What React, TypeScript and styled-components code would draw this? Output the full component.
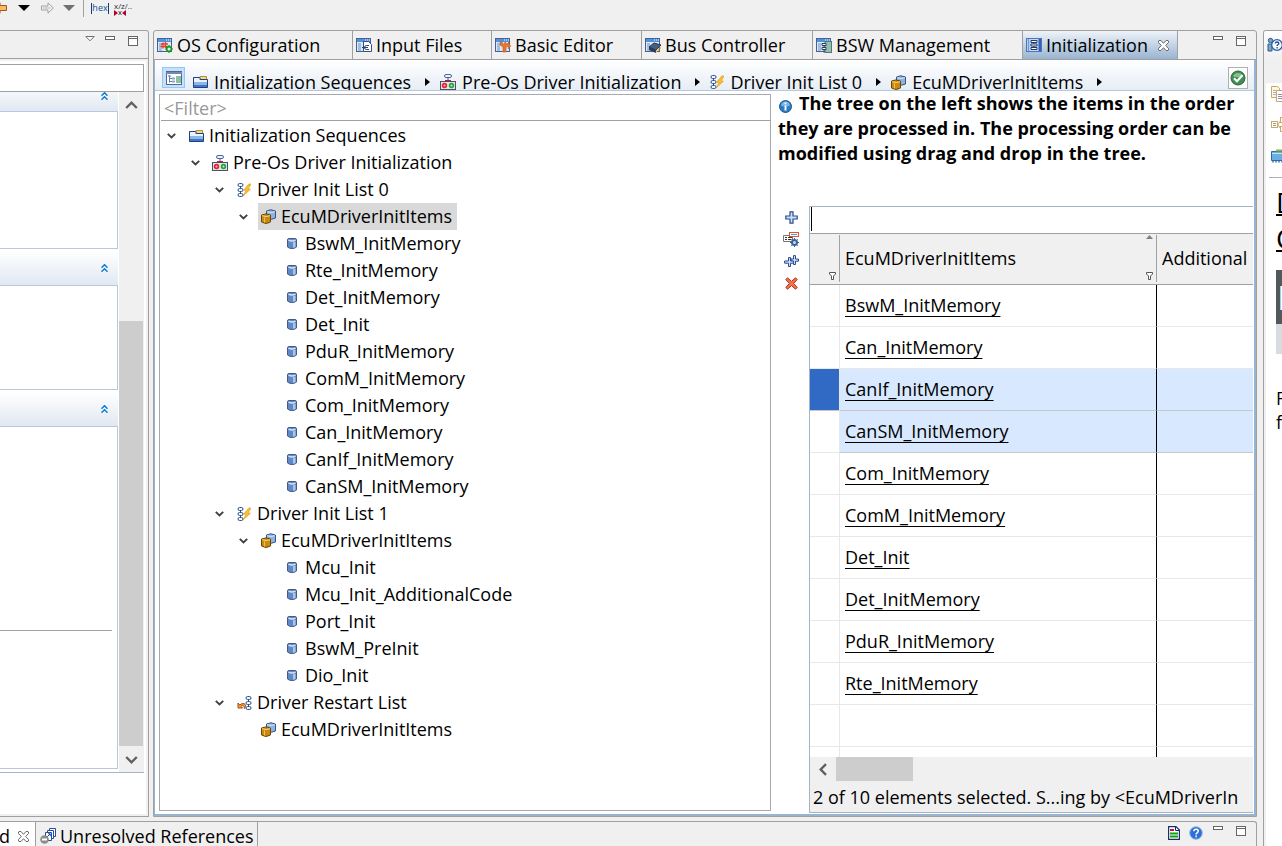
import React from "react";
import styled, { createGlobalStyle } from "styled-components";

const GlobalStyle = createGlobalStyle`
  *, *::before, *::after { box-sizing: border-box; }
  html, body, #root { height: 100%; }
  body {
    margin: 0;
    overflow: hidden;
    background: #f0f0f0;
    color: #000;
    font-family: "Open Sans", "Noto Sans", sans-serif;
    font-size: 18px;
    line-height: 27px;
  }
  button, input { font: inherit; color: inherit; margin: 0; padding: 0; }
  button { border: 0; background: none; display: flex; align-items: center; justify-content: center; }
  svg { display: block; flex: none; }
  p, h2 { margin: 0; }
`;

const line = "#a0a0a0";
const frame = "#99b4d1";

/* ---------- icons ---------- */

type IconProps = { size?: number; h?: number };

const Svg = ({ size = 16, h, box = "0 0 16 16", children }: IconProps & { box?: string; children: React.ReactNode }) => (
  <svg width={size} height={h ?? size} viewBox={box} aria-hidden="true">{children}</svg>
);

const WindowBase = () => (
  <>
    <rect x="0.5" y="1.5" width="14" height="13" fill="#dbe9f8" stroke="#4a5f92" />
    <rect x="1" y="2" width="13" height="3" fill="#4f93dd" />
    <path d="M9 3h1M11 3h1M13 3h1" stroke="#fff" />
    <rect x="2" y="6" width="3" height="8" fill="#9fbfe2" />
  </>
);

const OsIcon = () => (
  <Svg>
    <WindowBase />
    <path d="M6 5.500v6M8.500 5v6M4 7h7M3.500 9.500h7" stroke="#e8402c" strokeWidth="1.300" />
    <circle cx="12" cy="12" r="2.300" fill="#fff" stroke="#18951f" strokeWidth="1.600" />
    <path d="M12 8v2M12 14v2M8 12h2M14 12h2M9.300 9.300l1.200 1.200M13.500 13.500l1.200 1.200M14.700 9.300l-1.200 1.200M10.500 13.500l-1.200 1.200" stroke="#18951f" strokeWidth="1.200" />
  </Svg>
);
const InputFilesIcon = () => (
  <Svg>
    <WindowBase />
    <path d="M7.500 4.500h5l3 3v7h-8z" fill="#fff" stroke="#3b4c80" />
    <path d="M13 8.500h-2.500a2 2 0 0 0 0 4H13M6 10.500h6" stroke="#2b4378" fill="none" />
  </Svg>
);
const BasicIcon = () => (
  <Svg>
    <WindowBase />
    <path d="M5 5v3l3 2v5h3v-5l3-2V5l-2 2-2-2-1 3-2-3z" fill="#e9772d" stroke="#c2571b" strokeWidth="0.600" />
    <path d="M11 9h5M13.500 7v5" stroke="#e9772d" strokeWidth="1.500" />
  </Svg>
);
const BusIcon = () => (
  <Svg>
    <WindowBase />
    <path d="M4 10l5-4 7 2-5 5z" fill="#4a5d80" stroke="#27344f" />
    <path d="M4 10l7 3v3l-7-3z" fill="#2c3a58" />
    <path d="M11.500 13v2.500M13.500 11v3M15.300 9.500V12" stroke="#f3c32b" strokeWidth="1.200" />
  </Svg>
);
const BswIcon = () => (
  <Svg>
    <WindowBase />
    <rect x="9" y="4.500" width="6.500" height="11" fill="#8fc3a3" stroke="#55708c" />
    <path d="M6 6.500h4v2H6zM6 10.500h4v2H6zM8 8.500v2M8 12.500v3" fill="#fff" stroke="#2d3f60" />
  </Svg>
);
const InitIcon = () => (
  <Svg>
    <rect x="0.500" y="1.500" width="15" height="13" fill="#c3dcf5" stroke="#5274b0" />
    <path d="M2.500 2v12" stroke="#6f9ddb" strokeWidth="1.500" />
    <rect x="12.500" y="2" width="2.500" height="12" fill="#2f62b4" />
    <path d="M5 3.500h6v2H5zM5 7h6v2H5zM5 10.500h6v2H5zM8 5.500V7M8 9v1.500" fill="#fff" stroke="#233a66" />
  </Svg>
);
const FolderIcon = () => (
  <Svg size={15} h={14} box="0 0 15 14">
    <path d="M7 1.500h6.500V5H7z" fill="#f4d98b" stroke="#b98d2c" />
    <path d="M0.500 2.500h6l1 2h7v8h-14z" fill="#3a77c8" stroke="#24407c" />
    <path d="M1 3h5.500v2H14v2H1z" fill="#eaf3fc" />
    <path d="M1 7h13v3H1z" fill="#8ab6e8" />
  </Svg>
);
const StagesIcon = () => (
  <Svg>
    <rect x="4.500" y="0.500" width="7" height="3" rx="1.500" fill="#eaf4ff" stroke="#44699e" />
    <path d="M8 4v5M5 6.500h6" stroke="#a8264b" fill="none" />
    <rect x="0.500" y="7.500" width="15" height="8" fill="#dfe3ea" stroke="#4a4f63" />
    <circle cx="4.500" cy="11.500" r="2.700" fill="#e8202a" />
    <circle cx="11.500" cy="11.500" r="2.700" fill="#23a23a" />
    <circle cx="4.500" cy="11.500" r="1" fill="#fbc4c4" />
    <circle cx="11.500" cy="11.500" r="1" fill="#c9f2cc" />
  </Svg>
);
const ChainIcon = () => (
  <g fill="#eef6ff" stroke="#2d4f86">
    <rect x="1" y="0.500" width="5" height="3" rx="1.500" />
    <rect x="1" y="5.500" width="5" height="3" rx="1.500" />
    <rect x="1" y="10.500" width="5" height="3" rx="1.500" />
    <path d="M3.500 3v3M3.500 8v3" />
  </g>
);
const DriverListIcon = () => (
  <Svg size={14} h={14} box="0 0 14 14">
    <ChainIcon />
    <path d="M12 0.800L6.500 7.200h2.700L6 13 13.500 6.200h-2.500L14 1.300z" fill="#fbc02c" stroke="#dd9414" strokeWidth="0.600" />
  </Svg>
);
const RestartIcon = () => (
  <Svg size={15} h={14} box="0 0 15 14">
    <g transform="translate(8 0)"><ChainIcon /></g>
    <path d="M1 7v5h4.500L4 10.300c1.500-1.500 3.500-.8 3.300 2.200C10.500 9 7 5.500 2.800 9z" fill="#f6a54a" stroke="#9c4e0d" />
  </Svg>
);
const ContainerIcon = () => (
  <Svg size={15} h={15} box="0 0 15 15">
    <path d="M5.500 2q4-2.500 9 0v7q-4 2.500-9 0z" fill="#8fb2e2" stroke="#39537f" />
    <path d="M6 2.700q4 1.600 8 0" stroke="#d5e5f7" fill="none" />
    <path d="M0.500 6q4-2.200 9 0v7q-4.500 3-9 0z" fill="#c98a12" stroke="#6f4708" />
    <path d="M1.200 6.700q4 1.700 7.800 0" stroke="#f7db8a" fill="none" />
    <path d="M3.500 8.500v5" stroke="#f0c24c" />
  </Svg>
);
const ItemIcon = () => (
  <Svg size={10} h={11} box="0 0 10 11">
    <path d="M0.500 2q0-1.500 1.500-1.500h6q1.500 0 1.500 1.500v7q-1.500 1.500-4.500 1.500T0.500 9z" fill="#5f8ac6" stroke="#445a88" />
    <path d="M1.500 2.200q3.500 1.600 7 0" stroke="#d5e4f5" fill="none" strokeWidth="1.400" />
    <path d="M6 4h2.500v5.300L6 9.800z" fill="#a8c6ea" />
  </Svg>
);
const Chevron = () => (
  <Svg size={9} h={6} box="0 0 9 6"><path d="M0.800 0.800l3.700 3.700 3.700-3.700" fill="none" stroke="#404040" strokeWidth="1.900" /></Svg>
);
const ScrollArrow = ({ turn = 0 }: { turn?: number }) => (
  <Svg size={13} box="0 0 13 13"><path transform={`rotate(${turn} 6.500 6.500)`} d="M1.200 9l5.300-5.300L11.800 9" fill="none" stroke="#606060" strokeWidth="2.400" /></Svg>
);
const Collapse = () => (
  <Svg size={7} h={8} box="0 0 7 8"><path d="M0.500 3.700l3-3 3 3M0.500 7.700l3-3 3 3" fill="none" stroke="#0a78d0" strokeWidth="1.400" /></Svg>
);
const MenuTri = () => (
  <Svg size={10} h={6} box="0 0 10 6"><path d="M0.800 0.500h8.400L5 4.800z" fill="#fff" stroke="#707070" /></Svg>
);
const MinIcon = () => (
  <Svg size={10} h={4} box="0 0 10 4"><rect x="0.500" y="0.500" width="9" height="3" fill="#fff" stroke="#666" /></Svg>
);
const MaxIcon = () => (
  <Svg size={10} h={10} box="0 0 10 10"><rect x="0.500" y="0.500" width="9" height="9" fill="#fff" stroke="#666" /><path d="M0 2.500h10" stroke="#666" /></Svg>
);
const CloseIcon = () => (
  <Svg size={11} box="0 0 11 11"><path d="M1 .5h2l2.500 2.800L8 .5h2l.5.5v1.500L7.700 5.500l2.800 3V10l-.5.500H8L5.500 7.700 3 10.500H1L.5 10V8.500l2.800-3-2.800-3V1z" fill="#fff" stroke="#686868" /></Svg>
);
const CrumbArrow = () => (
  <Svg size={5} h={8} box="0 0 5 8"><path d="M0 0v8l5-4z" fill="#000" /></Svg>
);
const OutlineIcon = () => (
  <Svg>
    <rect x="0.500" y="1.500" width="15" height="13" fill="#fff" stroke="#56658e" />
    <path d="M0 3h16" stroke="#7088b8" strokeWidth="2" />
    <rect x="10" y="6" width="5" height="7" fill="#8cc0a4" />
    <path d="M3.500 5.500v7M3.500 8.500h3M3.500 11.500h3M2 6h3" stroke="#5b80ae" fill="none" />
    <path d="M6 8.500h3M6 11.500h3" stroke="#8aa9cc" strokeWidth="2" />
  </Svg>
);
const CheckIcon = () => (
  <Svg box="0 0 16 16">
    <circle cx="8" cy="8" r="7" fill="#3f8f50" stroke="#2c6240" />
    <path d="M3 6a5.500 5 0 0 1 10 0q-5 2.500-10 0z" fill="#8bbd93" />
    <path d="M4 8.300l3 3 5.500-6" stroke="#fff" strokeWidth="2" fill="none" />
  </Svg>
);
const InfoIcon = () => (
  <svg width="13" height="13" viewBox="0 0 13 13" aria-label="Information">
    <circle cx="6.500" cy="6.500" r="6" fill="#2b7cc4" stroke="#1b5590" />
    <path d="M2 5.500a4.500 4 0 0 1 9 0q-4.500 2-9 0z" fill="#79b4e4" />
    <path d="M6.500 2.500v1.800M6.500 5.400v5" stroke="#fff" strokeWidth="1.900" />
  </svg>
);
const PlusIcon = () => (
  <Svg size={13} box="0 0 13 13"><path d="M5 .8h3V5h4.200v3H8v4.200H5V8H.8V5H5z" fill="#c8e4fb" stroke="#2c4a8c" strokeWidth="1.200" /></Svg>
);
const AddSettingsIcon = () => (
  <Svg size={16} h={15} box="0 0 16 15">
    <path d="M0.500 3.500h9v6h-9z" fill="#fff" stroke="#777" />
    <path d="M2 5.500h2M5 5.500h4M2 7.500h2M5 7.500h3" stroke="#333" />
    <rect x="6.500" y="0.500" width="9" height="4" fill="#fff" stroke="#e5532a" />
    <path d="M8 2.500h6" stroke="#5b95dc" />
    <circle cx="11.500" cy="10.500" r="2.500" fill="#c5daf2" stroke="#3d639f" strokeWidth="2" />
    <path d="M11.500 6v2M11.500 13v2M7 10.500h2M14 10.500h2M8.300 7.300l1.500 1.500M13.200 12.200l1.500 1.500M14.700 7.300l-1.500 1.500M9.800 12.200l-1.500 1.500" stroke="#3d639f" />
  </Svg>
);
const MultiPlusIcon = () => (
  <Svg size={15} h={12} box="0 0 15 12">
    <path d="M9.500.6h2V4h3v2.200h-3v3.300h-2V6.200H7V4h2.500z" fill="#c8e4fb" stroke="#2c4a8c" />
    <path d="M4.500 2.600h2V6h3v2.200h-3v3.300h-2V8.200H.6V6h3.900z" fill="#c8e4fb" stroke="#2c4a8c" />
  </Svg>
);
const DeleteIcon = () => (
  <Svg size={13} box="0 0 13 13"><path d="M2.500.8L6.500 4.400 10.500.8l1.700 1.700L8.600 6.500l3.600 4-1.700 1.700-4-3.600-4 3.600L.8 10.500l3.600-4L.8 2.500z" fill="#f4734a" stroke="#b92a14" /></Svg>
);
const FunnelIcon = () => (
  <Svg size={7} h={8} box="0 0 7 8"><path d="M0.500 0.500h6v1.500L4.500 4v3.500h-2V4l-2-2z" fill="#fff" stroke="#555" /></Svg>
);
const SortIcon = () => (
  <Svg size={7} h={4} box="0 0 7 4"><path d="M3.500 0L7 4H0z" fill="#808080" /></Svg>
);
const BackIcon = () => (
  <Svg size={8} h={12} box="0 0 8 12"><path d="M-6 6L0 .5V3.500h6.500v5H0v3z" fill="#ffb765" stroke="#9a5a1a" /></Svg>
);
const ForwardIcon = () => (
  <Svg size={13} h={12} box="0 0 13 12"><path d="M.5 4h6.500V.8L12.300 6 7 11.200V8H.5z" fill="#f4f4f4" stroke="#a0a0a0" /><path d="M2 6h8" stroke="#b5b5b5" /></Svg>
);
const DownTri = ({ color }: { color: string }) => (
  <Svg size={12} h={6} box="0 0 12 6"><path d="M0 0h12L6 6z" fill={color} /></Svg>
);
const SyncArrows = () => (
  <Svg size={12} h={6} box="0 0 12 6"><path d="M0 0v6L4 3zM12 0v6L8 3z" fill="#b00032" /><path d="M4.500 1l3 4M7.500 1l-3 4" stroke="#555" /></Svg>
);
const ReportIcon = () => (
  <Svg size={12} h={14} box="0 0 12 14">
    <path d="M0.600 0.600h7.400l3.400 3.400v9.400H0.600z" fill="#fff" stroke="#1c2d68" strokeWidth="1.200" />
    <path d="M7.500 1v3.500H11" stroke="#1c2d68" fill="none" />
    <path d="M2 4h4" stroke="#c0103c" strokeWidth="2" />
    <path d="M2 7.500h8M2 10.500h8" stroke="#10a010" strokeWidth="2" />
  </Svg>
);
const HelpIcon = () => (
  <Svg size={14} box="0 0 14 14">
    <circle cx="7" cy="7" r="6.300" fill="#2c6fd8" stroke="#9eb7dc" />
    <path d="M4.800 5.300q.2-2 2.300-2 2.200 0 2.200 1.800 0 1-1.200 1.800-1 .7-1 1.700M7.100 9.600v1.700" stroke="#fff" strokeWidth="1.500" fill="none" />
  </Svg>
);
const RefsIcon = () => (
  <Svg>
    <path d="M9.500 0.500h6v8h-6z" fill="#fff" stroke="#234b9a" />
    <path d="M7.500 2.500h6v8h-6z" fill="#fff" stroke="#234b9a" />
    <path d="M5.500 4.500h6v8h-6z" fill="#fff" stroke="#234b9a" />
    <path d="M7 9l3-3M8 5.800h2.300v2.400" stroke="#234b9a" fill="none" />
    <circle cx="4.500" cy="11.500" r="4.300" fill="#8d8d8d" />
    <path d="M2 11.500h5" stroke="#fff" strokeWidth="1.800" />
  </Svg>
);
const HelpViewIcon = () => (
  <Svg>
    <circle cx="3.500" cy="3.500" r="2.200" fill="#7fa2c8" stroke="#2f5a8c" />
    <path d="M1 7h4v7H1z" fill="#7fa2c8" stroke="#2f5a8c" />
    <circle cx="10" cy="8" r="5.300" fill="#f5faff" stroke="#2a5fa8" strokeWidth="1.300" />
    <path d="M8.200 6.500q.2-1.500 1.900-1.500 1.700 0 1.700 1.400 0 .8-1 1.400-.7.500-.7 1.300M10.100 10v1.400" stroke="#1f4b8c" strokeWidth="1.300" fill="none" />
  </Svg>
);
const CopyIcon = () => (
  <Svg>
    <path d="M0.500 0.500h6l2 2v9h-8z" fill="#fff6e0" stroke="#c8a862" />
    <path d="M2 4.500h3M2 6.500h3M2 8.500h3" stroke="#a9b4c8" />
    <path d="M5.500 4.500h6l3 3v8h-9z" fill="#fff" stroke="#c8a862" />
    <path d="M7 8.500h5M7 10.500h6M7 12.500h6" stroke="#7b93bd" />
  </Svg>
);
const LinkIcon = () => (
  <Svg>
    <rect x="0.500" y="4.500" width="6" height="6" fill="#fff" stroke="#c8a862" />
    <path d="M2 6.500h3M2 8.500h3" stroke="#999" />
    <path d="M7 7.500L10 3M7 7.500l3 5" stroke="#c8a862" fill="none" />
    <rect x="9.500" y="0.500" width="6" height="5" fill="#fff" stroke="#c8a862" />
    <rect x="9.500" y="9.500" width="6" height="5" fill="#fff" stroke="#c8a862" />
  </Svg>
);
const BookIcon = () => (
  <Svg>
    <path d="M0.500 3.500h15v9h-15z" fill="#6daee0" stroke="#2f6aa8" />
    <path d="M5 2.500h11" stroke="#8db840" strokeWidth="2" />
    <path d="M1 5.500h15" stroke="#c4e0f5" />
    <path d="M2 13v1.500M5 13v1.500M8 13v1.500M11 13v1.500M14 13v1.500" stroke="#2f6aa8" strokeWidth="1.400" />
  </Svg>
);

/* ---------- page shell ---------- */

const Page = styled.div`
  height: 100vh;
  display: flex;
  flex-direction: column;
  overflow: hidden;
`;
const Toolbar = styled.header`
  flex: none;
  height: 30px;
  display: flex;
  align-items: flex-start;
`;
const ToolButton = styled.button<{ $w: number }>`
  flex: none;
  width: ${(p) => p.$w}px;
  height: 16px;
`;
const ToolDivider = styled.span`
  width: 1px;
  height: 17px;
  margin-right: 8px;
  background: ${line};
`;
const HexLabel = styled.span`
  height: 11px;
  border: solid #1c3a6c;
  border-width: 0 1px;
  color: #0b4fa0;
  font-size: 9px;
  line-height: 9px;
`;
const SymbolLabel = styled.span`
  display: flex;
  flex-direction: column;
  align-items: flex-start;
  font-size: 8px;
  line-height: 9px;
  color: #333;
`;
const Workbench = styled.div`
  flex: 1;
  min-height: 0;
  display: flex;
  gap: 6px;
`;
const MainColumn = styled.div`
  flex: 1;
  min-width: 0;
  display: flex;
  flex-direction: column;
  gap: 4px;
`;
const UpperRow = styled.div`
  flex: 1;
  min-height: 0;
  display: flex;
  gap: 4px;
`;
const WindowButtons = styled.div<{ $top?: number }>`
  display: flex;
  align-items: flex-start;
  margin-left: auto;
  gap: 13px;
  padding: ${(p) => p.$top ?? 5}px 10px 0 0;
`;
const ButtonPair = styled.div<{ $gap: number }>`
  display: flex;
  align-items: flex-start;
  gap: ${(p) => p.$gap}px;
`;

/* ---------- left properties view ---------- */

const SideView = styled.aside`
  flex: none;
  width: 149px;
  display: flex;
  flex-direction: column;
  border: solid ${line};
  border-width: 1px 1px 1px 0;
  border-radius: 0 3px 0 0;
`;
const SideHeader = styled.div`
  flex: none;
  height: 28px;
  display: flex;
  border-bottom: 1px solid ${line};
`;
const SideBody = styled.div`
  flex: 1;
  min-height: 0;
  display: flex;
  flex-direction: column;
  margin: 2px 2px 2px 0;
  padding: 3px 2px 41px 0;
  background: #fff;
`;
const SideSearch = styled.input`
  flex: none;
  width: 100%;
  height: 28px;
  border: 1px solid ${line};
  border-left: 0;
  border-radius: 0;
  background: #fff;
`;
const SideScroller = styled.div`
  flex: 1;
  min-height: 0;
  display: flex;
  border-bottom: 1px solid #a5b4c8;
`;
const Sections = styled.div`
  flex: 1;
  min-width: 0;
  overflow: hidden;
  padding-right: 1px;
`;
const SectionHead = styled.button<{ $h: number }>`
  width: 100%;
  height: ${(p) => p.$h}px;
  justify-content: flex-end;
  padding-right: 10px;
  background: linear-gradient(#fff, #e1e8f2);
`;
const CutHead = styled(SectionHead)`
  align-items: flex-start;
  background: linear-gradient(#f4f7fa, #e1e8f2);
`;
const SectionBody = styled.div<{ $h: number }>`
  height: ${(p) => p.$h}px;
  margin-bottom: 2px;
  border: solid #b8c7de;
  border-width: 1px 1px 1px 0;
`;
const SectionRule = styled.hr`
  margin: 203px 5px 0 0;
  border: 0;
  border-top: 1px solid ${line};
`;
const VScroll = styled.div`
  flex: none;
  width: 25px;
  display: flex;
  flex-direction: column;
  background: #f0f0f0;
`;
const VArrow = styled.button`
  height: 26px;
  width: 100%;
`;
const VTrack = styled.div`
  flex: 1;
  padding: 203px 1px 0 0;
`;
const VThumb = styled.div`
  height: 100%;
  background: #cdcdcd;
`;

/* ---------- editor ---------- */

const Editor = styled.main`
  flex: 1;
  min-width: 0;
  display: flex;
  flex-direction: column;
  border: 1px solid ${line};
  border-radius: 3px 3px 0 0;
`;
const TabStrip = styled.nav`
  flex: none;
  height: 29px;
  display: flex;
  border-bottom: 1px solid ${line};
`;
const Tab = styled.button<{ $w: number; $active?: boolean }>`
  flex: none;
  width: ${(p) => p.$w}px;
  justify-content: flex-start;
  gap: 4px;
  padding-left: 3px;
  border-right: 1px solid ${line};
  white-space: nowrap;
  background: ${(p) => (p.$active ? "linear-gradient(#eef3f9, #99b4d1)" : "none")};
`;
const TabClose = styled.span`
  margin-left: 6px;
`;
const EditorBody = styled.div`
  flex: 1;
  min-height: 0;
  display: flex;
  flex-direction: column;
  border: solid ${frame};
  border-width: 0 2px 2px 1px;
  background: #fff;
`;
const Breadcrumb = styled.nav`
  flex: none;
  height: 31px;
  display: flex;
  align-items: flex-start;
  padding: 7px 6px 0 7px;
  overflow: hidden;
  border-bottom: 1px solid #b5c8dc;
  background: linear-gradient(#fff, #e6edf5);
`;
const OutlineToggle = styled.button`
  flex: none;
  width: 23px;
  height: 21px;
  margin-right: 8px;
  border: 1px solid #90c8f6;
  background: #c5e0f8;
`;
const Crumb = styled.a`
  height: 30px;
  display: flex;
  align-items: center;
  gap: 6px;
  margin-right: 14px;
  color: #000;
  text-decoration: none;
  white-space: nowrap;
`;
const CrumbSep = styled.span`
  height: 30px;
  display: flex;
  align-items: center;
  margin-right: 10px;
`;
const StatusButton = styled.button`
  flex: none;
  width: 20px;
  height: 22px;
  margin-left: auto;
  border: 1px solid #b0b0b0;
  background: #fff;
`;
const Split = styled.div`
  flex: 1;
  min-height: 0;
  display: flex;
  gap: 7px;
`;

/* ---------- tree ---------- */

const TreePane = styled.section`
  flex: none;
  width: 56%;
  max-width: 612px;
  display: flex;
  flex-direction: column;
  margin: 3px 0 3px 4px;
  border: 1px solid #a8a8b0;
`;
const TreeFilter = styled.input`
  flex: none;
  width: calc(100% - 1px);
  height: 26px;
  margin-left: 1px;
  padding: 1px 0 0 3px;
  border: 0;
  border-bottom: 1px solid ${line};
  border-radius: 0;
  background: #fff;
  &::placeholder { color: #999; opacity: 1; }
`;
const Tree = styled.ul`
  list-style: none;
  margin: 0;
  padding: 1px 0 0;
  overflow: hidden;
`;
const TreeRow = styled.li<{ $level: number }>`
  height: 27px;
  display: flex;
  align-items: center;
  padding-left: ${(p) => 5 + p.$level * 24}px;
  white-space: nowrap;
`;
const Twisty = styled.button`
  flex: none;
  width: 12px;
  height: 27px;
  margin-right: 9px;
`;
const NodeLabel = styled.span<{ $selected?: boolean }>`
  height: 27px;
  display: flex;
  align-items: center;
  padding-right: 5px;
  background: ${(p) => (p.$selected ? "#d9d9d9" : "none")};
`;
const NodeIcon = styled.span`
  width: 20px;
  margin-right: 3px;
  display: flex;
  justify-content: center;
`;

/* ---------- table side ---------- */

const Detail = styled.section`
  flex: 1;
  min-width: 0;
  display: flex;
  flex-direction: column;
  overflow: hidden;
`;
const Hint = styled.p`
  flex: none;
  height: 115px;
  font-weight: 700;
  line-height: 25px;
  white-space: nowrap;
  svg { display: inline-block; vertical-align: -3px; margin: 0 7px 0 1px; }
`;
const GridArea = styled.div`
  flex: 1;
  min-height: 0;
  display: flex;
  padding-bottom: 1px;
`;
const SideTools = styled.div`
  flex: none;
  width: 31px;
  display: flex;
  flex-direction: column;
  align-items: flex-start;
  padding-left: 5px;
`;
const SideTool = styled.button`
  width: 16px;
  height: 22px;
`;
const Grid = styled.div`
  flex: 1;
  min-width: 0;
  display: flex;
  flex-direction: column;
  border: solid #a5b4c0;
  border-width: 1px 0 1px 1px;
  margin-right: 1px;
`;
const GridFilter = styled.input`
  width: 100%;
  height: 25px;
  border: 0;
  border-bottom: 1px solid ${line};
  border-radius: 0;
  background: #fff;
`;
const Caret = styled.span`
  position: absolute;
  left: 1px;
  top: 0;
  width: 1px;
  height: 24px;
  background: #000;
`;
const FilterBox = styled.div`
  flex: none;
  position: relative;
  height: 26px;
`;
const TableClip = styled.div`
  flex: 1;
  min-height: 0;
  overflow: hidden;
`;
const Table = styled.table`
  width: 100%;
  table-layout: fixed;
  border-collapse: separate;
  border-spacing: 0;
`;
const NarrowCol = styled.col` width: 30px; `;
const NameCol = styled.col` width: 317px; `;
const Th = styled.th`
  height: 52px;
  padding: 2px 0;
  border-bottom: 1px solid ${line};
  background: #f0f0f0;
  font-weight: 400;
  text-align: left;
  overflow: hidden;
`;
const HeadCell = styled.div<{ $last?: boolean }>`
  height: 47px;
  display: flex;
  align-items: center;
  justify-content: space-between;
  padding-left: 5px;
  border-right: ${(p) => (p.$last ? "0" : `1px solid ${line}`)};
  white-space: nowrap;
`;
const HeadMarks = styled.span`
  align-self: stretch;
  display: flex;
  flex-direction: column;
  justify-content: space-between;
  align-items: center;
  padding: 0 3px 2px 0;
  margin-left: auto;
`;
const Td = styled.td<{ $tone?: "light" | "strong"; $edge?: "light" | "black" }>`
  height: 42px;
  padding: 0 0 0 5px;
  background: ${(p) => (p.$tone === "strong" ? "#316ac5" : p.$tone === "light" ? "#d8e9ff" : "#fff")};
  border-bottom: 1px solid ${(p) => (p.$tone ? "#c4c8cc" : "#e8e8e8")};
  border-right: ${(p) => (p.$edge ? `1px solid ${p.$edge === "black" ? "#000" : "#e8e8e8"}` : "0")};
  white-space: nowrap;
  overflow: hidden;
`;
const CellLink = styled.a`
  color: #000;
  text-decoration: underline;
  text-decoration-thickness: 1px;
  text-decoration-skip-ink: none;
  text-underline-offset: 4px;
`;
const HScroll = styled.div`
  flex: none;
  height: 25px;
  display: flex;
  padding-bottom: 1px;
  background: #f0f0f0;
`;
const HArrow = styled.button` width: 26px; `;
const HThumb = styled.div`
  width: 77px;
  background: #cdcdcd;
`;
const Status = styled.p`
  flex: none;
  height: 30px;
  padding-left: 3px;
  line-height: 30px;
  background: #f0f0f0;
  white-space: nowrap;
  overflow: hidden;
`;

/* ---------- bottom and right views ---------- */

const BottomView = styled.section`
  flex: none;
  height: 25px;
  display: flex;
  border: solid ${line};
  border-width: 1px 1px 0 0;
  border-radius: 0 3px 0 0;
  overflow: hidden;
`;
const BottomTab = styled.button<{ $w: number; $active?: boolean }>`
  flex: none;
  width: ${(p) => p.$w}px;
  height: 28px;
  justify-content: flex-start;
  gap: 4px;
  padding-left: ${(p) => (p.$active ? 0 : 4)}px;
  border-right: 1px solid ${line};
  background: ${(p) => (p.$active ? "#fff" : "none")};
  white-space: nowrap;
`;
const TabTail = styled.span`
  width: 14px;
  overflow: hidden;
  display: flex;
  justify-content: flex-end;
  padding-right: 4px;
`;
const HelpView = styled.aside`
  flex: none;
  width: 19px;
  display: flex;
  flex-direction: column;
  border: solid ${line};
  border-width: 1px 0 0 1px;
  border-radius: 3px 0 0 0;
  overflow: hidden;
`;
const HelpHead = styled.div`
  flex: none;
  height: 52px;
  padding: 6px 0 0 3px;
  background: linear-gradient(#fff, #f0f0f0 28px);
`;
const HelpBody = styled.div`
  flex: 1;
  margin-left: 2px;
  background: #fff;
  overflow: hidden;
`;
const HelpTools = styled.div`
  height: 95px;
  display: flex;
  flex-direction: column;
  gap: 15px;
  padding: 3px 0 0 2px;
  margin-left: 3px;
  border-bottom: 1px solid #a5b4c0;
`;
const HelpArticle = styled.article`
  padding: 6px 0 0 10px;
`;
const HelpTitle = styled.h2`
  height: 86px;
  font-size: 28px;
  font-weight: 400;
  line-height: 36px;
  text-decoration: underline;
  text-decoration-thickness: 2px;
`;
const HelpFigure = styled.div`
  height: 84px;
  margin-bottom: 32px;
  padding: 16px 0 0 4px;
  border-bottom: 30px solid #d8dce0;
  background: #53595b;
`;
const FigureScreen = styled.div`
  height: 24px;
  border-left: 1px solid #8fd3f5;
  background: #fff;
`;
const HelpText = styled.p` line-height: 24px; `;

/* ---------- data ---------- */

const tabs = [
  { label: "OS Configuration", icon: <OsIcon />, w: 199 },
  { label: "Input Files", icon: <InputFilesIcon />, w: 139 },
  { label: "Basic Editor", icon: <BasicIcon />, w: 150 },
  { label: "Bus Controller", icon: <BusIcon />, w: 171 },
  { label: "BSW Management", icon: <BswIcon />, w: 210 },
  { label: "Initialization", icon: <InitIcon />, w: 155, active: true },
];

const crumbs = [
  { label: "Initialization Sequences", icon: <FolderIcon /> },
  { label: "Pre-Os Driver Initialization", icon: <StagesIcon /> },
  { label: "Driver Init List 0", icon: <DriverListIcon /> },
  { label: "EcuMDriverInitItems", icon: <ContainerIcon /> },
];

const icons = {
  folder: <FolderIcon />,
  stages: <StagesIcon />,
  list: <DriverListIcon />,
  restart: <RestartIcon />,
  container: <ContainerIcon />,
  item: <ItemIcon />,
};

type Node = { label: string; level: number; icon: keyof typeof icons; open?: boolean; selected?: boolean };

const items = (labels: string[]): Node[] => labels.map((label) => ({ label, level: 4, icon: "item" }));

const nodes: Node[] = [
  { label: "Initialization Sequences", level: 0, icon: "folder", open: true },
  { label: "Pre-Os Driver Initialization", level: 1, icon: "stages", open: true },
  { label: "Driver Init List 0", level: 2, icon: "list", open: true },
  { label: "EcuMDriverInitItems", level: 3, icon: "container", open: true, selected: true },
  ...items([
    "BswM_InitMemory", "Rte_InitMemory", "Det_InitMemory", "Det_Init", "PduR_InitMemory",
    "ComM_InitMemory", "Com_InitMemory", "Can_InitMemory", "CanIf_InitMemory", "CanSM_InitMemory",
  ]),
  { label: "Driver Init List 1", level: 2, icon: "list", open: true },
  { label: "EcuMDriverInitItems", level: 3, icon: "container", open: true },
  ...items(["Mcu_Init", "Mcu_Init_AdditionalCode", "Port_Init", "BswM_PreInit", "Dio_Init"]),
  { label: "Driver Restart List", level: 2, icon: "restart", open: true },
  { label: "EcuMDriverInitItems", level: 3, icon: "container" },
];

const rows = [
  "BswM_InitMemory", "Can_InitMemory", "CanIf_InitMemory", "CanSM_InitMemory", "Com_InitMemory",
  "ComM_InitMemory", "Det_Init", "Det_InitMemory", "PduR_InitMemory", "Rte_InitMemory", "", "",
];
const selectedRows = ["CanIf_InitMemory", "CanSM_InitMemory"];

export default function App() {
  return (
    <Page>
      <GlobalStyle />
      <Toolbar>
        <ToolButton $w={8} aria-label="Back"><BackIcon /></ToolButton>
        <ToolButton $w={31} aria-label="Back history"><DownTri color="#000" /></ToolButton>
        <ToolButton $w={16} aria-label="Forward"><ForwardIcon /></ToolButton>
        <ToolButton $w={28} aria-label="Forward history"><DownTri color="#707074" /></ToolButton>
        <ToolDivider />
        <ToolButton $w={16}><HexLabel>hex</HexLabel></ToolButton>
        <ToolButton $w={30}><SymbolLabel>x/z/..<SyncArrows /></SymbolLabel></ToolButton>
      </Toolbar>

      <Workbench>
        <MainColumn>
          <UpperRow>
            <SideView>
              <SideHeader>
                <WindowButtons>
                  <ButtonPair $gap={10}>
                    <button aria-label="View menu"><MenuTri /></button>
                    <button aria-label="Minimize"><MinIcon /></button>
                  </ButtonPair>
                  <button aria-label="Maximize"><MaxIcon /></button>
                </WindowButtons>
              </SideHeader>
              <SideBody>
                <SideSearch aria-label="Search" />
                <SideScroller>
                  <Sections>
                    <CutHead $h={19} aria-label="Collapse section"><Collapse /></CutHead>
                    <SectionBody $h={138} />
                    <SectionHead $h={34} aria-label="Collapse section"><Collapse /></SectionHead>
                    <SectionBody $h={105} />
                    <SectionHead $h={34} aria-label="Collapse section"><Collapse /></SectionHead>
                    <SectionBody $h={343}><SectionRule /></SectionBody>
                  </Sections>
                  <VScroll>
                    <VArrow aria-label="Scroll up"><ScrollArrow /></VArrow>
                    <VTrack><VThumb /></VTrack>
                    <VArrow aria-label="Scroll down"><ScrollArrow turn={180} /></VArrow>
                  </VScroll>
                </SideScroller>
              </SideBody>
            </SideView>

            <Editor>
              <TabStrip>
                {tabs.map((t) => (
                  <Tab key={t.label} $w={t.w} $active={t.active}>
                    {t.icon}
                    {t.label}
                    {t.active && <TabClose><CloseIcon /></TabClose>}
                  </Tab>
                ))}
                <WindowButtons>
                  <button aria-label="Minimize"><MinIcon /></button>
                  <button aria-label="Maximize"><MaxIcon /></button>
                </WindowButtons>
              </TabStrip>
              <EditorBody>
                <Breadcrumb>
                  <OutlineToggle aria-label="Toggle outline"><OutlineIcon /></OutlineToggle>
                  {crumbs.map((c) => (
                    <React.Fragment key={c.label}>
                      <Crumb href="#">{c.icon}{c.label}</Crumb>
                      <CrumbSep><CrumbArrow /></CrumbSep>
                    </React.Fragment>
                  ))}
                  <StatusButton aria-label="Valid"><CheckIcon /></StatusButton>
                </Breadcrumb>
                <Split>
                  <TreePane>
                    <TreeFilter placeholder="&lt;Filter&gt;" aria-label="Filter tree" />
                    <Tree>
                      {nodes.map((n, i) => (
                        <TreeRow key={i} $level={n.level}>
                          <Twisty aria-label="Toggle" disabled={!n.open}>{n.open && <Chevron />}</Twisty>
                          <NodeLabel $selected={n.selected}>
                            <NodeIcon>{icons[n.icon]}</NodeIcon>
                            {n.label}
                          </NodeLabel>
                        </TreeRow>
                      ))}
                    </Tree>
                  </TreePane>
                  <Detail>
                    <Hint>
                      <InfoIcon />The tree on the left shows the items in the order
                      <br />they are processed in. The processing order can be
                      <br />modified using drag and drop in the tree.
                    </Hint>
                    <GridArea>
                      <SideTools>
                        <SideTool aria-label="Add"><PlusIcon /></SideTool>
                        <SideTool aria-label="Add with settings"><AddSettingsIcon /></SideTool>
                        <SideTool aria-label="Add multiple"><MultiPlusIcon /></SideTool>
                        <SideTool aria-label="Delete"><DeleteIcon /></SideTool>
                      </SideTools>
                      <Grid>
                        <FilterBox>
                          <GridFilter aria-label="Filter table" />
                          <Caret />
                        </FilterBox>
                        <TableClip>
                          <Table>
                            <colgroup><NarrowCol /><NameCol /><col /></colgroup>
                            <thead>
                              <tr>
                                <Th aria-label="Selection"><HeadCell><HeadMarks><span /><FunnelIcon /></HeadMarks></HeadCell></Th>
                                <Th><HeadCell>EcuMDriverInitItems<HeadMarks><SortIcon /><FunnelIcon /></HeadMarks></HeadCell></Th>
                                <Th><HeadCell $last>Additional</HeadCell></Th>
                              </tr>
                            </thead>
                            <tbody>
                              {rows.map((r, i) => {
                                const tone = selectedRows.includes(r) ? "light" : undefined;
                                return (
                                  <tr key={i}>
                                    <Td $edge="light" $tone={r === selectedRows[0] ? "strong" : undefined} />
                                    <Td $edge="black" $tone={tone}>{r && <CellLink href="#">{r}</CellLink>}</Td>
                                    <Td $tone={tone} />
                                  </tr>
                                );
                              })}
                            </tbody>
                          </Table>
                        </TableClip>
                        <HScroll>
                          <HArrow aria-label="Scroll left"><ScrollArrow turn={-90} /></HArrow>
                          <HThumb />
                        </HScroll>
                        <Status>2 of 10 elements selected. S...ing by &lt;EcuMDriverIn</Status>
                      </Grid>
                    </GridArea>
                  </Detail>
                </Split>
              </EditorBody>
            </Editor>
          </UpperRow>

          <BottomView>
            <BottomTab $w={36} $active><TabTail>d</TabTail><CloseIcon /></BottomTab>
            <BottomTab $w={222}><RefsIcon />Unresolved References</BottomTab>
            <WindowButtons $top={4}>
              <ButtonPair $gap={10}>
                <ButtonPair $gap={9}>
                  <button aria-label="Report"><ReportIcon /></button>
                  <button aria-label="Help"><HelpIcon /></button>
                </ButtonPair>
                <button aria-label="Minimize"><MinIcon /></button>
              </ButtonPair>
              <button aria-label="Maximize"><MaxIcon /></button>
            </WindowButtons>
          </BottomView>
        </MainColumn>

        <HelpView>
          <HelpHead><HelpViewIcon /></HelpHead>
          <HelpBody>
            <HelpTools><CopyIcon /><LinkIcon /><BookIcon /></HelpTools>
            <HelpArticle>
              <HelpTitle>D<br />C</HelpTitle>
              <HelpFigure><FigureScreen /></HelpFigure>
              <HelpText>F<br />f</HelpText>
            </HelpArticle>
          </HelpBody>
        </HelpView>
      </Workbench>
    </Page>
  );
}
